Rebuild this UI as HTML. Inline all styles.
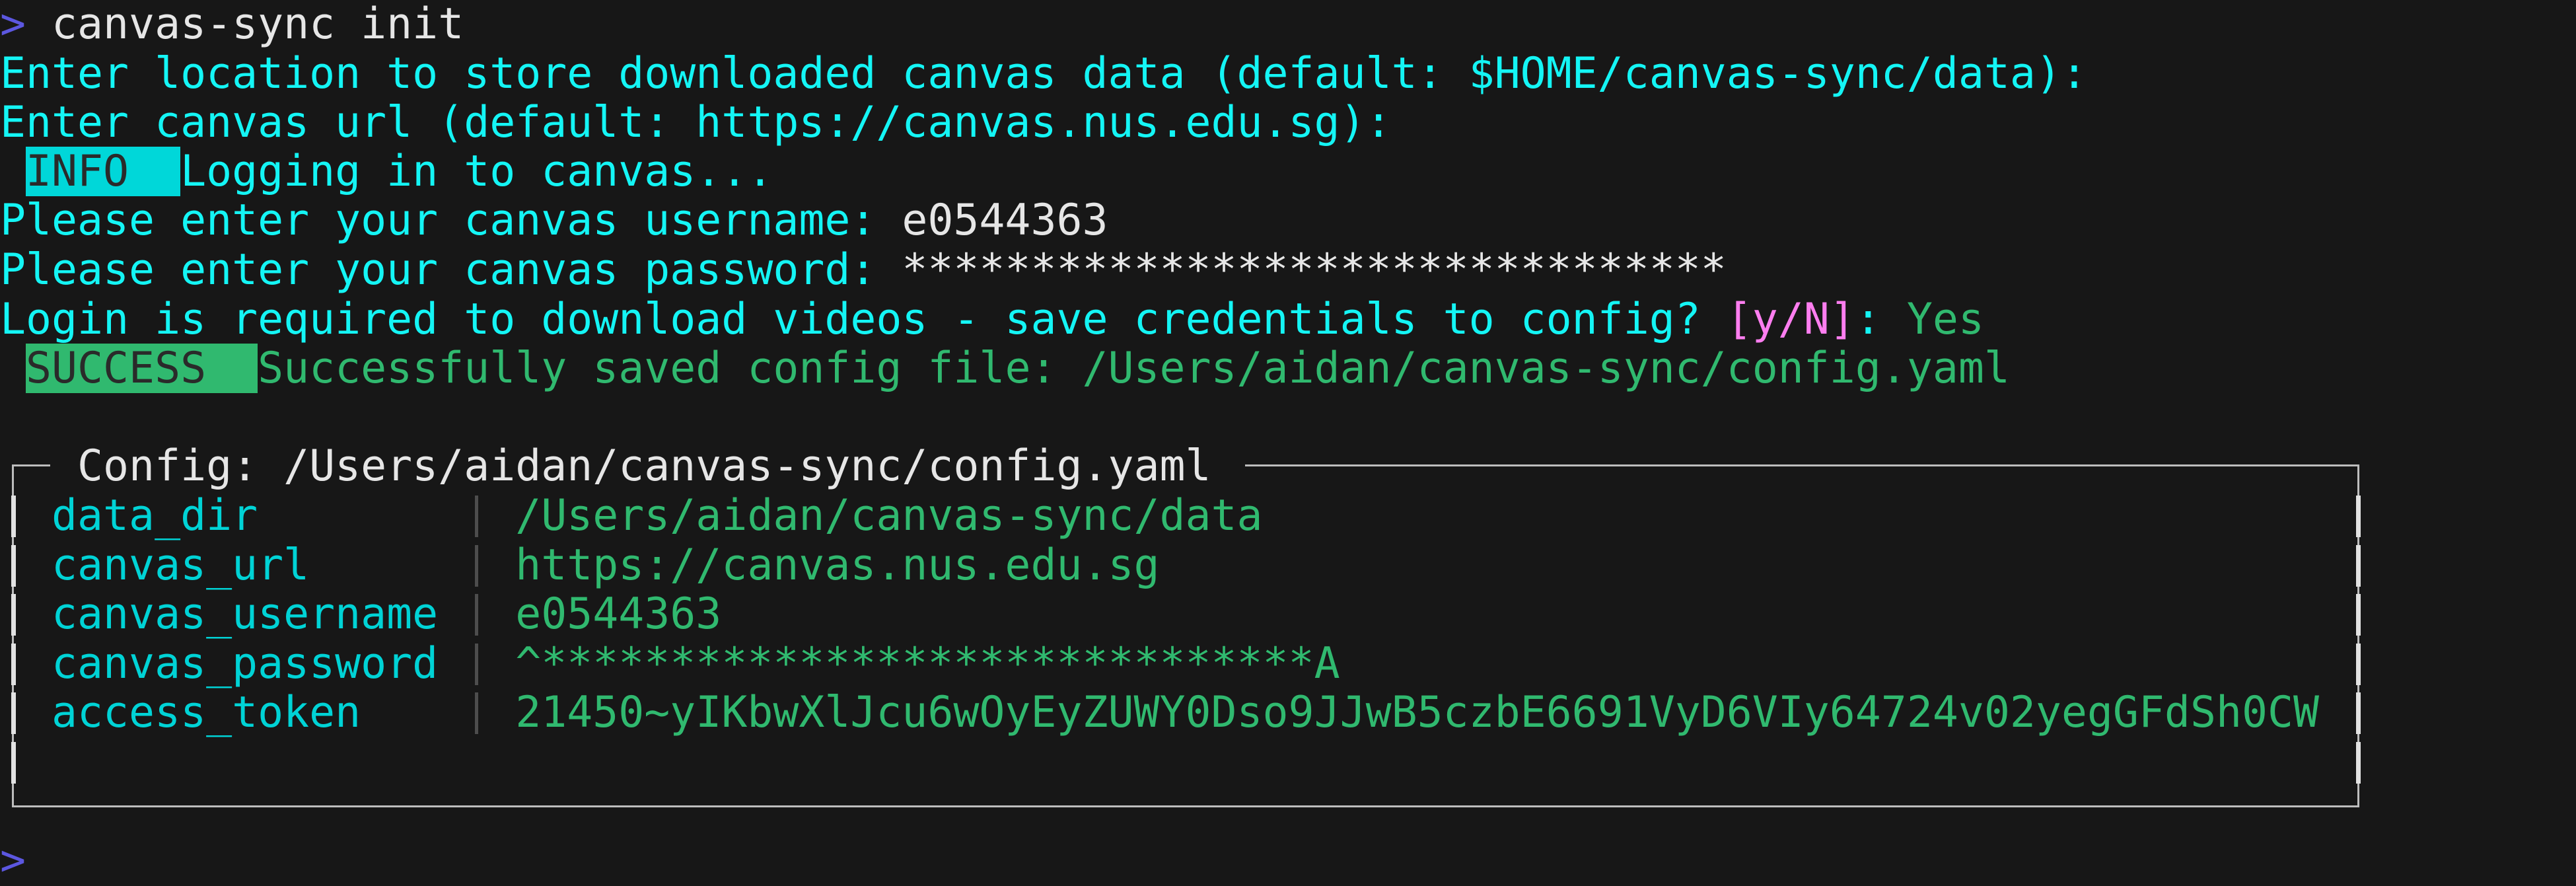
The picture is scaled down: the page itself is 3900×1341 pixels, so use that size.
<!DOCTYPE html>
<html><head><meta charset="utf-8"><style>
html,body{margin:0;padding:0;background:#171717;width:3900px;height:1332px;overflow:hidden}
.l{position:absolute;left:0;height:74.6px;line-height:74.6px;white-space:pre;font-family:"DejaVu Sans Mono","Liberation Mono",monospace;font-size:64.8px;color:#e6e6e6}
.c{color:#14f5f5}.k{color:#00d3d6}.g{color:#30b96f}.w{color:#e6e6e6}.p{color:#5c57e0}.m{color:#ff7ef0}
.bi{background:#00d7d9;color:#2a2a2a}.bs{background:#30b96f;color:#2a2a2a}
.hl{position:absolute;background:#bdbdbd;height:3px}
.vl{position:absolute;background:#bdbdbd;width:3px}
.tp{position:absolute;background:#e2e2e2;width:7px;height:63px}
.gp{position:absolute;background:#4d4d4d;width:5px;height:63px}
</style></head><body>
<div class="l" style="top:0px"><span class="p">&gt;</span> canvas-sync init</div>
<div class="l c" style="top:74.6px">Enter location to store downloaded canvas data (default: $HOME/canvas-sync/data):</div>
<div class="l c" style="top:149.2px">Enter canvas url (default: https://canvas.nus.edu.sg):</div>
<div class="l c" style="top:222.8px"> <span class="bi">INFO  </span>Logging in to canvas...</div>
<div class="l c" style="top:297.4px">Please enter your canvas username: <span class="w">e0544363</span></div>
<div class="l c" style="top:372px">Please enter your canvas password: <span class="w">********************************</span></div>
<div class="l c" style="top:446.6px">Login is required to download videos - save credentials to config? <span class="m">[y/N]</span>: <span class="g">Yes</span></div>
<div class="l g" style="top:521.2px"> <span class="bs">SUCCESS  </span>Successfully saved config file: /Users/aidan/canvas-sync/config.yaml</div>

<div class="l w" style="top:669.4px">   Config: /Users/aidan/canvas-sync/config.yaml</div>
<div class="hl" style="left:18px;top:703px;width:58px"></div>
<div class="hl" style="left:1885px;top:703px;width:1687px"></div>
<div class="hl" style="left:18px;top:1219px;width:3554px"></div>
<div class="vl" style="left:18px;top:703px;height:518px"></div>
<div class="vl" style="left:3569px;top:703px;height:518px"></div>

<div class="l k" style="top:744px">  data_dir        <span class="g">  /Users/aidan/canvas-sync/data</span></div>
<div class="l k" style="top:818.6px">  canvas_url      <span class="g">  https://canvas.nus.edu.sg</span></div>
<div class="l k" style="top:893.2px">  canvas_username <span class="g">  e0544363</span></div>
<div class="l k" style="top:967.8px">  canvas_password <span class="g">  ^******************************A</span></div>
<div class="l k" style="top:1042.4px">  access_token    <span class="g">  21450~yIKbwXlJcu6wOyEyZUWY0Dso9JJwB5czbE6691VyD6VIy64724v02yegGFdSh0CW</span></div>

<div class="tp" style="left:17px;top:750px"></div>
<div class="tp" style="left:17px;top:824.6px"></div>
<div class="tp" style="left:17px;top:899.2px"></div>
<div class="tp" style="left:17px;top:973.8px"></div>
<div class="tp" style="left:17px;top:1048.4px"></div>
<div class="tp" style="left:17px;top:1123px"></div>
<div class="tp" style="left:3567px;top:750px"></div>
<div class="tp" style="left:3567px;top:824.6px"></div>
<div class="tp" style="left:3567px;top:899.2px"></div>
<div class="tp" style="left:3567px;top:973.8px"></div>
<div class="tp" style="left:3567px;top:1048.4px"></div>
<div class="tp" style="left:3567px;top:1123px"></div>
<div class="gp" style="left:719px;top:750px"></div>
<div class="gp" style="left:719px;top:824.6px"></div>
<div class="gp" style="left:719px;top:899.2px"></div>
<div class="gp" style="left:719px;top:973.8px"></div>
<div class="gp" style="left:719px;top:1048.4px"></div>

<div class="l" style="top:1266px"><span class="p">&gt;</span></div>
</body></html>
